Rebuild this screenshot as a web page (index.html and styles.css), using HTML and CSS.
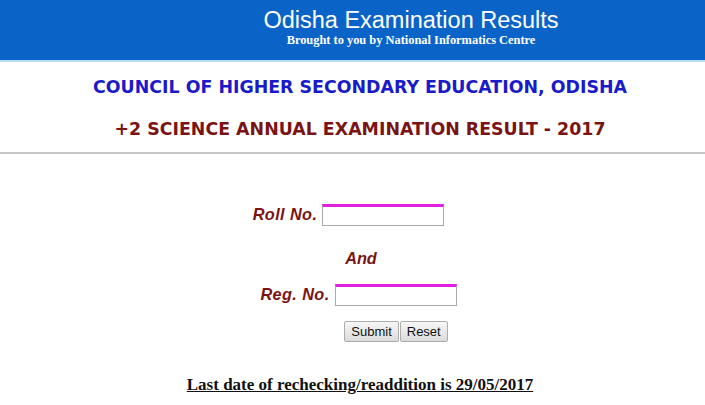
FILE: index.html
```html
<!DOCTYPE html>
<html>
<head>
<meta charset="utf-8">
<link rel="stylesheet" href="styles.css">
</head>
<body>
<div class="header">
  <div class="title">Odisha Examination Results</div>
  <div class="subtitle">Brought to you by National Informatics Centre</div>
</div>
<div class="heads">
  <div class="council">COUNCIL OF HIGHER SECONDARY EDUCATION, ODISHA</div>
  <div class="exam">+2 SCIENCE ANNUAL EXAMINATION RESULT - 2017</div>
</div>
<div class="form">
  <div class="row row-roll"><span class="label wide">Roll No.</span><input class="field" type="text"></div>
  <div class="row row-and"><span class="label">And</span></div>
  <div class="row row-reg"><span class="label wide">Reg. No.</span><input class="field" type="text"></div>
  <div class="row row-btn"><button class="btn">Submit</button><button class="btn">Reset</button></div>
</div>
<div class="note"><span>Last date of rechecking/readdition is 29/05/2017</span></div>
</body>
</html>
```
FILE: styles.css
```css
html, body { margin: 0; padding: 0; background: #fff; }
body { font-family: "Liberation Sans", Arial, sans-serif; }
.header {
  height: 60px;
  background: #0a64c8;
  border-bottom: 2px solid #b8dcf6;
  display: flex;
  flex-direction: column;
  align-items: center;
  padding-left: 117px;
  box-sizing: content-box;
}
.title {
  color: #fff;
  font-size: 23.5px;
  line-height: 26px;
  margin-top: 7px;
}
.subtitle {
  color: #fff;
  font-family: "Liberation Serif", "Times New Roman", serif;
  font-weight: bold;
  font-size: 12.4px;
  line-height: 14px;
  margin-top: 0;
}
.heads {
  border-bottom: 2px solid #c8c8c8;
  display: flex;
  flex-direction: column;
  align-items: center;
  font-family: "DejaVu Sans", Verdana, sans-serif;
  font-weight: bold;
  font-size: 17.4px;
  padding-top: 15px;
  padding-left: 15px;
  height: 92px;
  box-sizing: border-box;
}
.council { color: #1a1ac8; line-height: 21px; }
.exam { color: #7a1414; line-height: 21px; margin-top: 21px; }
.form {
  display: flex;
  flex-direction: column;
  align-items: center;
  padding-top: 48px;
}
.row { display: flex; align-items: center; justify-content: center; }
.label {
  color: #7a1414;
  font-weight: bold;
  font-style: italic;
  font-size: 16.3px;
}
.label.wide { letter-spacing: 0.4px; }
.row-roll { height: 24px; margin-left: -8px; }
.row-and { height: 20px; margin-top: 22px; margin-left: 17px; }
.row-reg { height: 24px; margin-top: 14px; margin-left: 12px; }
.row-btn { margin-top: 15px; margin-left: 87px; gap: 1px; }
.field {
  width: 122px;
  height: 22px;
  box-sizing: border-box;
  margin: 1px 0 0 5px;
  border: 1px solid #a9a9a9;
  border-top: 3px solid #e020e0;
  padding: 0;
  background: #fff;
}
.btn {
  font-family: "Liberation Sans", Arial, sans-serif;
  font-size: 13px;
  color: #111;
  height: 21px;
  padding: 0 6px;
  border: 1px solid #adadad;
  border-radius: 2px;
  background: linear-gradient(#f6f6f6, #dcdcdc);
  margin: 0;
}
.note {
  text-align: center;
  margin-top: 33px;
  padding-left: 15px;
  font-family: "Liberation Serif", "Times New Roman", serif;
  font-weight: bold;
  font-size: 17px;
  color: #111;
}
.note span { text-decoration: underline; }
```
